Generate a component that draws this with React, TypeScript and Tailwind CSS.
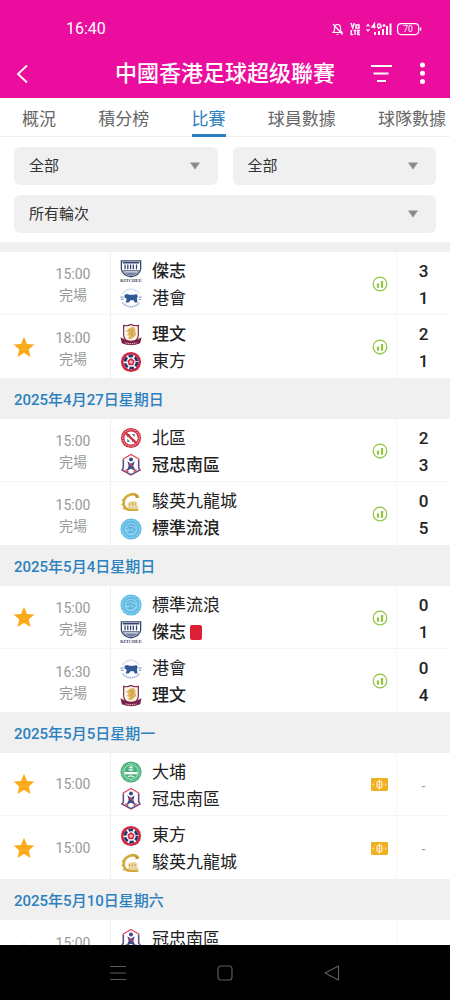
import { useState } from 'react';
import type { ReactNode } from 'react';

type TeamId = 'kitchee' | 'hkfc' | 'leeman' | 'eastern' | 'north' | 'southern' | 'kowloon' | 'rangers' | 'taipo';

type Match = {
  time: string;
  status?: string;
  starred?: boolean;
  upcoming?: boolean;
  home: TeamId;
  away?: TeamId;
  score?: [number, number];
  redCard?: 'home' | 'away';
};

type Round = { date?: string; matches: Match[] };

const NAMES: Record<TeamId, string> = {
  kitchee: '傑志',
  hkfc: '港會',
  leeman: '理文',
  eastern: '東方',
  north: '北區',
  southern: '冠忠南區',
  kowloon: '駿英九龍城',
  rangers: '標準流浪',
  taipo: '大埔',
};

const TABS = ['概況', '積分榜', '比賽', '球員數據', '球隊數據'];

const ROUNDS: Round[] = [
  {
    matches: [
      { time: '15:00', status: '完場', home: 'kitchee', away: 'hkfc', score: [3, 1] },
      { time: '18:00', status: '完場', starred: true, home: 'leeman', away: 'eastern', score: [2, 1] },
    ],
  },
  {
    date: '2025年4月27日星期日',
    matches: [
      { time: '15:00', status: '完場', home: 'north', away: 'southern', score: [2, 3] },
      { time: '15:00', status: '完場', home: 'kowloon', away: 'rangers', score: [0, 5] },
    ],
  },
  {
    date: '2025年5月4日星期日',
    matches: [
      { time: '15:00', status: '完場', starred: true, home: 'rangers', away: 'kitchee', score: [0, 1], redCard: 'away' },
      { time: '16:30', status: '完場', home: 'hkfc', away: 'leeman', score: [0, 4] },
    ],
  },
  {
    date: '2025年5月5日星期一',
    matches: [
      { time: '15:00', starred: true, upcoming: true, home: 'taipo', away: 'southern' },
      { time: '15:00', starred: true, upcoming: true, home: 'eastern', away: 'kowloon' },
    ],
  },
  {
    date: '2025年5月10日星期六',
    matches: [{ time: '15:00', status: '\u00a0', home: 'southern' }],
  },
];

const CRESTS: Record<TeamId, ReactNode> = {
  kitchee: (
    <>
      <path d="M1.500 1H22.500V10Q21.500 16.500 12 18.500Q2.500 16.500 1.500 10Z" fill="#fff" stroke="#34446b" strokeWidth="1.400" />
      <path d="M3 3H21" stroke="#34446b" strokeWidth="1.600" />
      <path d="M5.500 5V10M8.500 5V10M11.500 5V10M14.500 5V10M18 5V10" stroke="#34446b" strokeWidth="1.400" />
      <path d="M3 11H21Q20 15.500 12 17.500Q4 15.500 3 11Z" fill="#75809f" />
      <path d="M5 13H19" stroke="#fff" strokeWidth="1" />
      <text x="12" y="24" textAnchor="middle" fontSize="5" fontWeight="700" fill="#3c465f" fontFamily="Liberation Serif, serif">KITCHEE</text>
    </>
  ),
  hkfc: (
    <>
      <path d="M3 7.500A10 9 0 0 1 21 7.500" fill="none" stroke="#c3d2e6" strokeWidth="1.800" strokeDasharray="1.400 .8" />
      <path d="M3 17A10 8 0 0 0 21 17" fill="none" stroke="#8ba6cd" strokeWidth="1.800" strokeDasharray="1.400 .8" />
      <path d="M5 8.500L8 7.500L10 8.500H15L18 7.500L19.500 10L18.500 12L19 17H16L15 14.500H11.500L9.500 17H6L7.500 13L5 11.500Z" fill="#31599a" />
      <path d="M0.500 11H4M1 13.500H4M20.500 11H23.500M20.500 13.500H23" stroke="#8ba6cd" strokeWidth="1.200" />
    </>
  ),
  leeman: (
    <>
      <path d="M4 1.500Q8 2.500 12 .5Q16 2.500 20 1.500V12Q20 18 12 21Q4 18 4 12Z" fill="#fbf5e9" stroke="#7a1f45" strokeWidth="1.200" />
      <path d="M14 3Q18 5 16.500 8Q19 12 15.500 14L12 16.500L8.500 15.500L10.500 13L7.500 12L9.500 9L6.500 8L10 4.500Z" fill="#e0b45a" />
      <path d="M11 6L14 8L12 11L14 13" fill="none" stroke="#b98a38" strokeWidth=".8" />
      <path d="M0.500 14.500L5 17Q12 19.500 19 17L23.500 14.500L22 21Q12 25.500 2 21Z" fill="#7a1f45" />
      <path d="M6 20.500Q12 22.500 18 20.500" fill="none" stroke="#d9b6c5" strokeWidth="1.300" strokeDasharray="1.500 .8" />
    </>
  ),
  eastern: (
    <>
      <circle cx="12" cy="12" r="11" fill="#d3273f" />
      <circle cx="12" cy="12" r="8.200" fill="#fff" />
      <circle cx="12" cy="12" r="6.600" fill="none" stroke="#28366d" strokeWidth="3" strokeDasharray="5 1.910" />
      <path d="M12 7.500L16 10.500L14.500 15.500H9.500L8 10.500Z" fill="#d3273f" />
      <circle cx="12" cy="12" r="2" fill="#edb6c0" />
    </>
  ),
  north: (
    <>
      <circle cx="12" cy="12" r="11" fill="#cf3445" />
      <circle cx="12" cy="12" r="9" fill="none" stroke="#f1a9ae" strokeWidth="1.200" strokeDasharray="1.500 1.200" />
      <circle cx="12" cy="12" r="7.200" fill="#fff" />
      <path d="M8 8H11V11H8ZM13 7.500L16 8V11ZM8 13L11 16H8ZM13 14H16L14 17Z" fill="#445089" />
      <path d="M6 6.500L18 17.500" stroke="#cf3445" strokeWidth="2.600" />
    </>
  ),
  southern: (
    <>
      <path d="M12 .5L20.500 5.500V15L22 17.500L12 23L2 17.500L3.500 15V5.500Z" fill="#fff" stroke="#df4257" strokeWidth="1.400" />
      <path d="M3.800 6.500V15L2.500 17.500L12 22.500L21.500 17.500L20.200 15V6.500" fill="none" stroke="#4a5a98" strokeWidth="1.400" />
      <circle cx="12" cy="6" r="2.200" fill="#3c4a88" />
      <path d="M8 8L12 10.500L16 8L14.500 13L17 18.500L12 16L7 18.500L9.500 13Z" fill="#3c4a88" />
      <path d="M10 10L14 14M6 17L9 19.500M18 17L15 19.500" stroke="#df4257" strokeWidth="1.500" />
    </>
  ),
  kowloon: (
    <>
      <path d="M20 7Q17 2 11 4Q4 6 4 13Q4 20 11 20.500H20" fill="none" stroke="#d2a93a" strokeWidth="2.800" />
      <path d="M17 3L21 7L17 8Z" fill="#c1952b" />
      <path d="M5 9L2 10M4 14L1.500 15M6 18L3 20" stroke="#d2a93a" strokeWidth="1.300" />
      <path d="M8.500 14Q10.500 10 13 11.500Q16 9 19 13V16H8.500Z" fill="#ecd999" />
      <path d="M10.500 16V13.500M13.500 16V12.500M16.500 16V13M9 17.500H20" stroke="#c9a040" strokeWidth="1" />
    </>
  ),
  rangers: (
    <>
      <circle cx="12" cy="12" r="11.500" fill="#58b9e3" />
      <circle cx="12" cy="12" r="9.500" fill="none" stroke="#a6dcf2" strokeWidth="1.300" strokeDasharray="1.500 1.100" />
      <circle cx="12" cy="12" r="7.200" fill="#8bcfed" />
      <path d="M7 9L12 7L17 9M7 12Q12 8 16 13M8 15Q13 18 17 12M11 10V16" fill="none" stroke="#52aedb" strokeWidth="1.200" />
    </>
  ),
  taipo: (
    <>
      <circle cx="12" cy="12" r="11.500" fill="#43b07a" />
      <circle cx="12" cy="12" r="9.600" fill="none" stroke="#b9e3cc" strokeWidth="1" strokeDasharray="1.600 1" />
      <circle cx="12" cy="12" r="7.800" fill="#43b07a" stroke="#e3f5ea" strokeWidth=".8" />
      <path d="M12 5V11M9.500 7.500Q12 5.500 14.500 7.500M9 9.800H15" stroke="#fff" strokeWidth="1" fill="none" />
      <path d="M5 12H19V14.500H5Z" fill="#fff" />
      <path d="M8.500 17L12 16.200L15.500 17.500" stroke="#fff" strokeWidth="1.100" fill="none" />
    </>
  ),
};

function Crest({ team }: { team: TeamId }) {
  return (
    <svg viewBox="0 0 24 24" className="size-[22px] shrink-0 overflow-visible" aria-hidden="true">
      {CRESTS[team]}
    </svg>
  );
}

function Star({ className }: { className: string }) {
  return (
    <svg viewBox="0 0 24 24" className={`size-6 ${className}`} aria-hidden="true">
      <path d="M12 1.800L15 8.900L22.400 9.500L16.800 14.500L18.500 21.900L12 18L5.500 21.900L7.200 14.500L1.600 9.500L9 8.900Z" fill="currentColor" />
    </svg>
  );
}

function StatsIcon() {
  return (
    <svg viewBox="0 0 16 16" className="size-4" aria-hidden="true">
      <circle cx="8" cy="8" r="6.800" fill="none" stroke="#90c443" strokeWidth="1.200" />
      <path d="M6 7.500V11.800M10 5V11.800" stroke="#90c443" strokeWidth="2.200" />
    </svg>
  );
}

function OddsIcon() {
  return (
    <svg viewBox="0 0 17 13" className="mr-0.5 h-[13px] w-[17px]" aria-hidden="true">
      <rect width="17" height="13" rx="1" fill="#f0b022" />
      <ellipse cx="8.500" cy="6.500" rx="2.600" ry="3.500" fill="none" stroke="#fff3d2" strokeWidth="1.200" />
      <path d="M8.500 1.500V11.500M7.500 6.500H9.500" stroke="#fff3d2" strokeWidth="1" />
      <path d="M1.500 6.500L2.800 5V8ZM15.500 6.500L14.200 5V8Z" fill="#fff3d2" />
    </svg>
  );
}

function TeamLine({ team, winner, redCard }: { team: TeamId; winner: boolean; redCard: boolean }) {
  return (
    <div className="flex h-[27px] items-center">
      <Crest team={team} />
      <span className={`ml-2.5 text-[17px] leading-[27px] text-[#222] ${winner ? 'font-medium' : ''}`}>{NAMES[team]}</span>
      {redCard && <span className="ml-1 h-[15px] w-3 rounded-xs bg-[#dc1f35]" role="img" aria-label="紅牌" />}
    </div>
  );
}

function MatchRow({ match }: { match: Match }) {
  const [starred, setStarred] = useState(!!match.starred);
  const [home, away] = match.score ?? [0, 0];

  let starColor = 'text-transparent';
  if (starred) starColor = 'text-[#f9ab1c]';
  else if (!match.score) starColor = 'text-[#e8e8e8]';

  return (
    <li className="flex h-[63px] shrink-0 border-b border-[#f5f5f5] bg-white last:border-b-0">
      <div className="flex w-[111px] shrink-0 items-center border-r border-[#f0f0f0]">
        <button type="button" aria-label="收藏" aria-pressed={starred} onClick={() => setStarred(!starred)} className="flex w-12 justify-center">
          <Star className={starColor} />
        </button>
        <div className={`w-[50px] text-center text-sm leading-[21px] text-[#999] ${match.status ? 'pt-1' : 'pt-px'}`}>
          <div>{match.time}</div>
          {match.status && <div>{match.status}</div>}
        </div>
      </div>

      <div className="flex min-w-0 flex-1 flex-col justify-center pt-[3px] pl-[9px]">
        <TeamLine team={match.home} winner={home > away} redCard={match.redCard === 'home'} />
        {match.away ? (
          <TeamLine team={match.away} winner={away > home} redCard={match.redCard === 'away'} />
        ) : (
          <div className="h-[27px]" />
        )}
      </div>

      <div className="flex w-8 shrink-0 items-center justify-center pt-px">
        {match.score && <StatsIcon />}
        {match.upcoming && <OddsIcon />}
      </div>

      <div className="flex w-[54px] shrink-0 flex-col items-center justify-center border-l border-[#f5f5f5] pt-[3px] text-[17px] leading-[27px] font-medium text-[#222]">
        {match.score && (
          <>
            <span>{home}</span>
            <span>{away}</span>
          </>
        )}
        {match.upcoming && <span className="text-sm font-normal text-[#999]">-</span>}
      </div>
    </li>
  );
}

function Filter({ label, value, className = '' }: { label: string; value: string; className?: string }) {
  return (
    <label className={`relative block ${className}`}>
      <select aria-label={label} className="h-[38px] w-full appearance-none rounded-md bg-[#f0f0f0] px-[15px] text-[15px] text-[#333]">
        <option>{value}</option>
      </select>
      <svg viewBox="0 0 12 8" className="pointer-events-none absolute top-[15px] right-[17px] h-2 w-3" aria-hidden="true">
        <path d="M1 .5H11L6 7.500Z" fill="#8c8c8c" />
      </svg>
    </label>
  );
}

function StatusBar() {
  return (
    <div className="flex h-[49px] items-center justify-between pt-[9px] pr-7 pl-[66px] text-base">
      <span>16:40</span>
      <svg viewBox="0 0 92 16" className="h-4 w-[92px]" fill="none" stroke="#fff" aria-hidden="true">
        {/* muted bell */}
        <path d="M3 11.500L4.500 9.500V7Q4.500 3.500 7.500 3.500Q10.500 3.500 10.500 7V9.500L12 11.500ZM6.500 13.500H8.500M3 3L12.500 13.500" strokeWidth="1.200" />
        {/* VoLTE */}
        <path d="M21 2L22.700 7L24.400 2M26 4H29V7H26ZM21.200 9V13.500H23M23.500 9.500H26.500M25 9.500V14M30 9.500H27.800V13.500H30M27.800 11.500H29.500" strokeWidth="1.400" />
        {/* mobile data + signal */}
        <path d="M36.500 5.500L38 3.500L39.500 5.500M36.500 8L38 10L39.500 8" strokeWidth="1.200" />
        <path d="M44.500 7.500V2.500L42 6H45.500M51 3.500Q47.500 1.500 47.500 5Q47.500 8 51 6.500V5H49.500M52.500 4.500H55.500M54 3V6" strokeWidth="1.300" />
        <path d="M45 14V11M49 14V10M53 14V8M57 14V5M60.500 14V2.500" strokeWidth="2" />
        {/* battery */}
        <rect x="67.600" y="2.600" width="21" height="11" rx="3.500" strokeWidth="1.200" />
        <path d="M90.500 6.500V9.500" strokeWidth="1.600" />
        <text x="78" y="11.200" textAnchor="middle" fontSize="8.500" fill="#fff" stroke="none">70</text>
      </svg>
    </div>
  );
}

export default function App() {
  const [tab, setTab] = useState('比賽');

  return (
    <div className="flex h-screen flex-col overflow-hidden bg-white font-[Roboto,'Noto_Sans_CJK_SC',sans-serif]">
      <header className="shrink-0 bg-[#eb0d9e] text-white">
        <StatusBar />
        <div className="flex h-[49px] items-center justify-between pr-5 pl-4">
          <button type="button" aria-label="返回" className="w-16">
            <svg viewBox="0 0 13 20" className="h-5 w-[13px]" fill="none" stroke="currentColor" strokeWidth="1.800" aria-hidden="true">
              <path d="M11 1.500L2 10L11 18.500" />
            </svg>
          </button>
          <h1 className="text-[22px] font-medium whitespace-nowrap">中國香港足球超级聯賽</h1>
          <div className="flex items-center gap-[22px]">
            <button type="button" aria-label="篩選">
              <svg viewBox="0 0 22 20" className="h-5 w-[22px]" stroke="currentColor" strokeWidth="2" aria-hidden="true">
                <path d="M1 2H22M3.500 9.500H18.500M7 17H16" />
              </svg>
            </button>
            <button type="button" aria-label="更多">
              <svg viewBox="0 0 16 24" className="h-6 w-4" fill="currentColor" aria-hidden="true">
                <circle cx="8.500" cy="3" r="2.500" />
                <circle cx="8.500" cy="11.200" r="2.500" />
                <circle cx="8.500" cy="19.500" r="2.500" />
              </svg>
            </button>
          </div>
        </div>
      </header>

      <nav className="flex h-[39px] shrink-0 justify-between border-b border-[#f0f0f0] pr-1 pl-[22px]">
        {TABS.map((name) => (
          <button
            key={name}
            type="button"
            onClick={() => setTab(name)}
            className={`-mb-px border-b-3 pt-2 text-[17px] whitespace-nowrap ${
              name === tab ? 'border-[#2b80bf] text-[#2b80bf]' : 'border-transparent text-[#666]'
            }`}
          >
            {name}
          </button>
        ))}
      </nav>

      <div className="grid shrink-0 grid-cols-2 gap-x-[15px] gap-y-2.5 px-3.5 pt-2.5 pb-[9px]">
        <Filter label="球隊" value="全部" />
        <Filter label="主客" value="全部" />
        <Filter label="輪次" value="所有輪次" className="col-span-2" />
      </div>

      <main className="flex min-h-0 flex-1 flex-col overflow-hidden">
        <div className="h-[10px] shrink-0 bg-[#f0f0f0]" />
        {ROUNDS.map((round, i) => (
          <section key={i} className="shrink-0">
            {round.date && (
              <h2 className="flex h-[41px] items-center bg-[#f0f0f0] px-3.5 pt-1 text-[15px] font-medium text-[#2b80bf]">{round.date}</h2>
            )}
            <ul>
              {round.matches.map((match, j) => (
                <MatchRow key={j} match={match} />
              ))}
            </ul>
          </section>
        ))}
      </main>

      <footer className="flex h-[55px] shrink-0 items-center justify-center gap-[91px] bg-black text-[#5c5c5c]">
        <button type="button" aria-label="最近">
          <svg viewBox="0 0 16 16" className="size-4" stroke="currentColor" strokeWidth="1.200" aria-hidden="true">
            <path d="M0 1.500H16M0 8H16M0 14.500H16" />
          </svg>
        </button>
        <button type="button" aria-label="主頁">
          <svg viewBox="0 0 16 16" className="size-4" fill="none" stroke="currentColor" strokeWidth="1.200" aria-hidden="true">
            <rect x="1" y="1" width="14" height="14" rx="3" />
          </svg>
        </button>
        <button type="button" aria-label="返回上頁">
          <svg viewBox="0 0 16 16" className="size-4" fill="none" stroke="currentColor" strokeWidth="1.200" strokeLinejoin="round" aria-hidden="true">
            <path d="M1 8L14.500 1V15Z" />
          </svg>
        </button>
      </footer>
    </div>
  );
}
